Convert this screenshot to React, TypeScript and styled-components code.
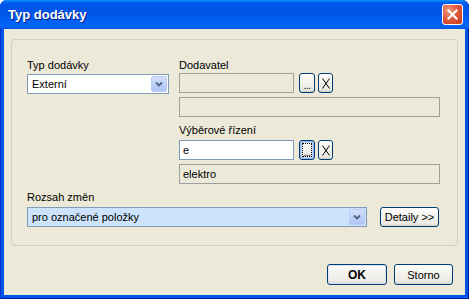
import React from "react";
import styled, { createGlobalStyle, css } from "styled-components";

const Global = createGlobalStyle`
  html, body { margin: 0; padding: 0; background: #ffffff; }
  body { font-family: "Liberation Sans", Arial, sans-serif; font-size: 11px; color: #000; }
`;

const Window = styled.div`
  width: 469px;
  height: 299px;
  box-sizing: border-box;
  display: flex;
  flex-direction: column;
  border-radius: 7px 7px 0 0;
  overflow: hidden;
  background: #0055e5;
  box-shadow: inset 1px 0 0 #0831d9, inset -1px 0 0 #001ea0, inset 0 -1px 0 #001ea0;
`;

const TitleBar = styled.div`
  height: 29px;
  flex: none;
  display: flex;
  align-items: center;
  justify-content: space-between;
  padding: 0 6px 0 8px;
  background: linear-gradient(
    to bottom,
    #0997ff 0%,
    #0058ee 10%,
    #0054e6 40%,
    #0062f8 80%,
    #0065fc 90%,
    #0052e0 100%
  );
  box-sizing: border-box;
`;

const Title = styled.span`
  font-family: "Liberation Sans", Arial, sans-serif;
  font-weight: bold;
  font-size: 13px;
  color: #ffffff;
  text-shadow: 1px 1px 0 #0a1f8a;
`;

const CloseBtn = styled.div`
  width: 21px;
  height: 21px;
  box-sizing: border-box;
  border: 1px solid #ffffff;
  border-radius: 3px;
  background: radial-gradient(circle at 30% 30%, #f09a80 0%, #e0583a 45%, #c63a1c 100%);
  display: flex;
  align-items: center;
  justify-content: center;
`;

const Client = styled.div`
  flex: 1;
  margin: 0 4px 4px 4px;
  background: #ece9d8;
  padding: 10px 7px 0 7px;
  display: flex;
  flex-direction: column;
`;

const GroupBox = styled.div`
  height: 207px;
  box-sizing: border-box;
  border: 1px solid #d0d0bf;
  border-radius: 4px;
  padding: 19px 14px 0 15px;
  display: flex;
  flex-direction: column;
`;

const TopGrid = styled.div`
  display: grid;
  grid-template-columns: 142px 261px;
  column-gap: 10px;
  align-items: start;
`;

const Column = styled.div`
  display: flex;
  flex-direction: column;
`;

const Label = styled.div<{ $mt?: number }>`
  height: 13px;
  line-height: 13px;
  margin-top: ${(p) => p.$mt ?? 0}px;
  white-space: nowrap;
`;

const Combo = styled.div<{ $width: number; $selected?: boolean; $mt?: number }>`
  width: ${(p) => p.$width}px;
  height: 20px;
  margin-top: ${(p) => p.$mt ?? 0}px;
  box-sizing: border-box;
  border: 1px solid #7f9db9;
  background: ${(p) => (p.$selected ? "#cce3fb" : "#ffffff")};
  display: flex;
  align-items: center;
  padding: 1px;
`;

const ComboText = styled.span`
  flex: 1;
  padding-left: 3px;
  line-height: 16px;
  white-space: nowrap;
`;

const DropBtn = styled.div`
  width: 16px;
  height: 16px;
  box-sizing: border-box;
  border-radius: 2px;
  border: 1px solid #b9cdf6;
  background: linear-gradient(to bottom, #d3e0fb 0%, #bccff8 60%, #aec4f6 100%);
  display: flex;
  align-items: center;
  justify-content: center;
`;

const FieldRow = styled.div<{ $mt?: number }>`
  display: flex;
  align-items: center;
  margin-top: ${(p) => p.$mt ?? 0}px;
`;

const TextField = styled.div<{ $width?: number; $disabled?: boolean; $mt?: number }>`
  width: ${(p) => (p.$width ? `${p.$width}px` : "100%")};
  height: 20px;
  margin-top: ${(p) => p.$mt ?? 0}px;
  box-sizing: border-box;
  border: 1px solid ${(p) => (p.$disabled ? "#a0a09a" : "#7f9db9")};
  background: ${(p) => (p.$disabled ? "#ebe9d9" : "#ffffff")};
  padding-left: 3px;
  line-height: 18px;
  white-space: nowrap;
`;

const xpButton = css`
  box-sizing: border-box;
  border: 1px solid #003c74;
  border-radius: 3px;
  background: linear-gradient(to bottom, #ffffff 0%, #f4f3ee 40%, #ecebe6 85%, #d6d0c5 100%);
  display: flex;
  align-items: center;
  justify-content: center;
  font-family: "Liberation Sans", Arial, sans-serif;
  font-size: 11px;
  color: #000;
  white-space: nowrap;
`;

const SmallBtn = styled.div<{ $focused?: boolean; $ml: number }>`
  ${xpButton};
  width: ${(p) => (p.$ml === 5 ? 16 : 15)}px;
  height: 20px;
  margin-left: ${(p) => p.$ml}px;
  font-size: 10px;
  position: relative;
  ${(p) =>
    p.$focused &&
    css`
      box-shadow: inset 0 0 0 1px #98b8ea, inset 0 0 0 2px #c0d4f4;
      &::after {
        content: "";
        position: absolute;
        inset: 2px;
        border: 1px dotted #000;
      }
    `}
`;

const Dots = styled.span`
  line-height: 10px;
  padding-top: 5px;
  letter-spacing: -0.5px;
`;

const BottomRow = styled.div`
  display: flex;
  align-items: flex-end;
  margin-top: 7px;
`;

const PushButton = styled.div<{ $width: number; $height: number; $bold?: boolean; $default?: boolean }>`
  ${xpButton};
  width: ${(p) => p.$width}px;
  height: ${(p) => p.$height}px;
  font-weight: ${(p) => (p.$bold ? "bold" : "normal")};
  font-size: ${(p) => (p.$bold ? "12px" : "11px")};
  ${(p) =>
    p.$default &&
    css`
      box-shadow: inset 0 0 0 1px #dce6f8;
    `}
`;

const DetailBtn = styled(PushButton)`
  margin-left: 13px;
`;

const Footer = styled.div`
  display: flex;
  justify-content: flex-end;
  gap: 7px;
  margin-top: 18px;
  padding-right: 5px;
`;

const Chevron = () => (
  <svg width="8" height="6" viewBox="0 0 8 6">
    <path d="M1 1.5 L4 4.5 L7 1.5" fill="none" stroke="#4d6185" strokeWidth="1.8" />
  </svg>
);

const ThinX = () => (
  <svg width="8" height="11" viewBox="0 0 8 11">
    <path d="M0.5 0.5 L7.5 10.5 M7.5 0.5 L0.5 10.5" stroke="#000" strokeWidth="1" fill="none" />
  </svg>
);

const CloseX = () => (
  <svg width="11" height="11" viewBox="0 0 11 11">
    <path d="M1.5 1.5 L9.5 9.5 M9.5 1.5 L1.5 9.5" stroke="#ffffff" strokeWidth="2.2" strokeLinecap="square" />
  </svg>
);

export default function App() {
  return (
    <>
      <Global />
      <Window>
        <TitleBar>
          <Title>Typ dodávky</Title>
          <CloseBtn>
            <CloseX />
          </CloseBtn>
        </TitleBar>
        <Client>
          <GroupBox>
            <TopGrid>
              <Column>
                <Label>Typ dodávky</Label>
                <Combo $width={142} $mt={2}>
                  <ComboText>Externí</ComboText>
                  <DropBtn>
                    <Chevron />
                  </DropBtn>
                </Combo>
              </Column>
              <Column>
                <Label>Dodavatel</Label>
                <FieldRow $mt={1}>
                  <TextField $width={115} $disabled />
                  <SmallBtn $ml={5}>
                    <Dots>...</Dots>
                  </SmallBtn>
                  <SmallBtn $ml={3}>
                    <ThinX />
                  </SmallBtn>
                </FieldRow>
                <TextField $disabled $mt={4} />
                <Label $mt={7}>Výběrové řízení</Label>
                <FieldRow $mt={3}>
                  <TextField $width={115}>e</TextField>
                  <SmallBtn $ml={5} $focused>
                    <Dots>...</Dots>
                  </SmallBtn>
                  <SmallBtn $ml={3}>
                    <ThinX />
                  </SmallBtn>
                </FieldRow>
                <TextField $disabled $mt={4}>
                  elektro
                </TextField>
              </Column>
            </TopGrid>
            <BottomRow>
              <Column>
                <Label>Rozsah změn</Label>
                <Combo $width={340} $selected $mt={3}>
                  <ComboText>pro označené položky</ComboText>
                  <DropBtn>
                    <Chevron />
                  </DropBtn>
                </Combo>
              </Column>
              <DetailBtn $width={59} $height={20}>
                Detaily &gt;&gt;
              </DetailBtn>
            </BottomRow>
          </GroupBox>
          <Footer>
            <PushButton $width={60} $height={21} $bold $default>
              OK
            </PushButton>
            <PushButton $width={59} $height={21}>
              Storno
            </PushButton>
          </Footer>
        </Client>
      </Window>
    </>
  );
}
